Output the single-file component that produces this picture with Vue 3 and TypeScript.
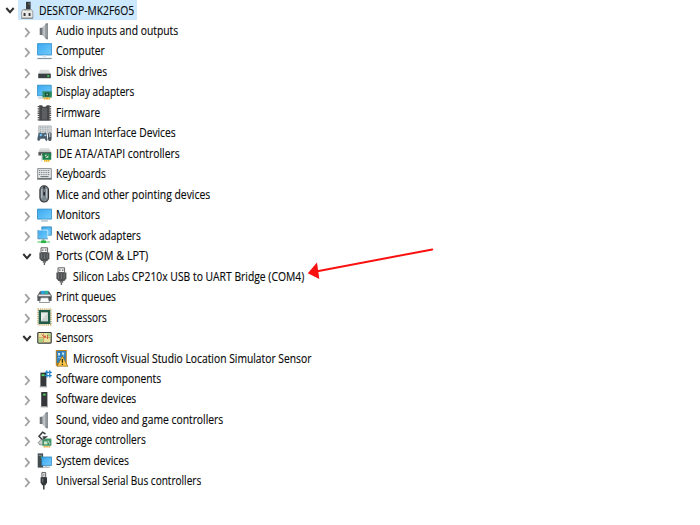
<script setup lang="ts">
import { onMounted, ref } from 'vue'

interface DeviceRow {
  label: string
  icon: string
  level: 0 | 1 | 2
  state: 'open' | 'closed' | 'leaf'
  width: number
}

const rows: DeviceRow[] = [
  { label: 'DESKTOP-MK2F6O5', icon: 'host', level: 0, state: 'open', width: 95.5 },
  { label: 'Audio inputs and outputs', icon: 'speaker', level: 1, state: 'closed', width: 122 },
  { label: 'Computer', icon: 'computer', level: 1, state: 'closed', width: 49 },
  { label: 'Disk drives', icon: 'disk', level: 1, state: 'closed', width: 51 },
  { label: 'Display adapters', icon: 'display', level: 1, state: 'closed', width: 78 },
  { label: 'Firmware', icon: 'firmware', level: 1, state: 'closed', width: 44.5 },
  { label: 'Human Interface Devices', icon: 'hid', level: 1, state: 'closed', width: 119.5 },
  { label: 'IDE ATA/ATAPI controllers', icon: 'ide', level: 1, state: 'closed', width: 123.5 },
  { label: 'Keyboards', icon: 'keyboard', level: 1, state: 'closed', width: 50 },
  { label: 'Mice and other pointing devices', icon: 'mouse', level: 1, state: 'closed', width: 154 },
  { label: 'Monitors', icon: 'monitor', level: 1, state: 'closed', width: 44 },
  { label: 'Network adapters', icon: 'network', level: 1, state: 'closed', width: 84.5 },
  { label: 'Ports (COM & LPT)', icon: 'port', level: 1, state: 'open', width: 92 },
  { label: 'Silicon Labs CP210x USB to UART Bridge (COM4)', icon: 'port', level: 2, state: 'leaf', width: 231 },
  { label: 'Print queues', icon: 'printer', level: 1, state: 'closed', width: 60 },
  { label: 'Processors', icon: 'processor', level: 1, state: 'closed', width: 51 },
  { label: 'Sensors', icon: 'sensor', level: 1, state: 'open', width: 37 },
  { label: 'Microsoft Visual Studio Location Simulator Sensor', icon: 'warning', level: 2, state: 'leaf', width: 238.5 },
  { label: 'Software components', icon: 'component', level: 1, state: 'closed', width: 105 },
  { label: 'Software devices', icon: 'software', level: 1, state: 'closed', width: 80 },
  { label: 'Sound, video and game controllers', icon: 'speaker', level: 1, state: 'closed', width: 167 },
  { label: 'Storage controllers', icon: 'storage', level: 1, state: 'closed', width: 90 },
  { label: 'System devices', icon: 'system', level: 1, state: 'closed', width: 73 },
  { label: 'Universal Serial Bus controllers', icon: 'usb', level: 1, state: 'closed', width: 145 },
]

const tree = ref<HTMLElement | null>(null)
const scales = ref<number[]>(rows.map(() => 0.86))

onMounted(() => {
  const texts = tree.value?.querySelectorAll<HTMLElement>('.text')
  if (!texts) return
  scales.value = Array.from(texts).map((el, i) => rows[i].width / el.offsetWidth)
})
</script>

<template>
  <main class="window">
    <svg class="defs" width="0" height="0" aria-hidden="true">
      <defs>
        <linearGradient id="blue" x1="0" y1="0" x2="1" y2="1">
          <stop offset="0" stop-color="#3aa8f0" /><stop offset="1" stop-color="#74ccfc" />
        </linearGradient>
        <linearGradient id="metal" x1="0" y1="0" x2="1" y2="0">
          <stop offset="0" stop-color="#8b9196" /><stop offset="0.5" stop-color="#cdd1d4" /><stop offset="1" stop-color="#8d9296" />
        </linearGradient>
        <linearGradient id="lid" x1="0" y1="0" x2="0" y2="1">
          <stop offset="0" stop-color="#e9e9e9" /><stop offset="1" stop-color="#bfc1c2" />
        </linearGradient>
      </defs>
    </svg>
    <ul ref="tree" class="tree">
      <li v-for="(row, i) in rows" :key="i" class="row" :class="'level-' + row.level">
        <span class="toggle">
          <svg v-if="row.state === 'open'" width="10" height="12" viewBox="0 0 10 12">
            <path d="M1.3 4 L5 8.2 L8.7 4" fill="none" stroke="#303030" stroke-width="2" />
          </svg>
          <svg v-else-if="row.state === 'closed'" width="10" height="14" viewBox="0 0 10 14">
            <path d="M3.2 4.2 L7.1 8.6 L3.2 13" fill="none" stroke="#a2a2a2" stroke-width="1.8" />
          </svg>
        </span>
        <span class="item" :class="{ selected: row.level === 0 }">
          <svg class="icon" width="15" height="18" viewBox="0 0 15 18">
            <g v-if="row.icon === 'host'">
              <path d="M6 .8h4.6v7.6H6z" fill="#363a3d" /><path d="M8.6 2.4h1.1v1.2H8.6z" fill="#a6adb1" />
              <path d="M2.8 8.6h8.8l1.2 2.4v6.3H1.6V11z" fill="#e9e9e6" stroke="#8b8f90" stroke-width=".8" />
              <path d="M4.2 8.8h6" stroke="#777c7e" />
              <path d="M3.6 12h1.9v3H3.6zM8.6 12h1.9v3H8.6z" fill="#34383b" /><path d="M1.5 17.2h11.5" stroke="#77797a" stroke-width=".9" />
            </g>
            <g v-else-if="row.icon === 'speaker'">
              <path d="M2.7 5.8h2.8v7.2H2.7z" fill="#6d7479" />
              <path d="M5.2 5.8L9 1.4V17L5.2 13z" fill="url(#metal)" />
              <path d="M8.8 1.2h2.1v16.2L8.8 17z" fill="#7d8387" /><path d="M9.2 3v12" stroke="#b1b7bb" stroke-width=".7" />
            </g>
            <g v-else-if="row.icon === 'computer'">
              <path d="M.4 1.6h14.2v11.4H.4z" fill="url(#blue)" stroke="#2b8cc8" stroke-width=".8" />
              <path d="M5.5 13.4h4v1.7h-4z" fill="#d7e3eb" /><path d="M.3 16.5h14.4" stroke="#7f95a6" stroke-width="1.2" />
            </g>
            <g v-else-if="row.icon === 'disk'">
              <path d="M3.2 6.8h8.4l2 3.9H1.4z" fill="#d9dbdc" />
              <path d="M1.2 10.6h12.6v4.6H1.2z" fill="#3a3f42" /><path d="M10.3 12.2h1.8v1.6h-1.8z" fill="#42e857" />
            </g>
            <g v-else-if="row.icon === 'display'">
              <path d="M.4 2.2h13.8v10.6H.4z" fill="url(#blue)" stroke="#2d89c0" stroke-width=".8" />
              <path d="M1 15h5" stroke="#a9bac5" /><path d="M5.5 8.3h9.3v6.3H5.5z" fill="#2f8e61" />
              <path d="M8 9.6h4.4v3.8H8z" fill="#174d3a" /><path d="M9.2 10.7h2v1.6h-2z" fill="#7bb296" />
              <path d="M6.6 15.6h6.6" stroke="#f0aa22" stroke-width="2" stroke-dasharray="2 .4" />
            </g>
            <g v-else-if="row.icon === 'firmware'">
              <path d="M1.6 2v15M13.2 2v15" stroke="#505050" stroke-width="1.9" stroke-dasharray="1.3 .9" />
              <path d="M2.2 1.2h2.9c.4 2 4.2 2 4.6 0h2.9v15.6H2.2z" fill="#454748" />
              <path d="M7.4 4v11.5" stroke="#5d6062" stroke-width="5" />
            </g>
            <g v-else-if="row.icon === 'hid'">
              <path d="M1.8 2h12.4v8H1.8z" fill="#dde0e2" stroke="#9ba3a8" stroke-width=".8" />
              <path d="M3 3.8h10.2M3 5.8h10.2M3 7.8h10.2" stroke="#87929a" stroke-width=".9" stroke-dasharray="1 .7" />
              <path d="M1.6 9.2q2-1.5 3 0h1.8q2-1.5 3 0l1.1 6.4c-.2 2-2 1.8-2.6-.9H3.5C2.8 17.5.4 17.5.3 15z" fill="#4a5f70" />
              <path d="M11 10.4c0-2.5 3.6-2.5 3.6 0v4c0 3.4-3.6 3.4-3.6 0z" fill="#4b565f" />
              <path d="M12.8 9v4" stroke="#d9e3e9" /><circle cx="3.8" cy="11" r="1.2" fill="#6fc4fb" /><circle cx="8.2" cy="11.3" r=".9" fill="#b6dffb" />
            </g>
            <g v-else-if="row.icon === 'ide'">
              <path d="M3.2 3h8.8l2 4.3H1.4z" fill="url(#lid)" /><path d="M1.4 7.1h12.8v3.4H1.4z" fill="#505557" />
              <path d="M4.7 8.6v8" stroke="#d3d5d5" stroke-width="1.1" />
              <path d="M5.4 8.2h8.8v6.6H5.4z" fill="#1c8248" /><path d="M8 9.7h3.4v3.2H8z" fill="#b9dec4" /><path d="M7.6 12.8l3.4-3" stroke="#12482b" />
              <path d="M7 15.9h5.6" stroke="#edbb28" stroke-width="1.9" stroke-dasharray="1.7 .3" />
            </g>
            <g v-else-if="row.icon === 'keyboard'">
              <path d="M.7 3.6h13.6v9.8H.7z" fill="#e6e8e9" stroke="#888d90" />
              <path d="M2 5.6h11M2 7.6h11M2 9.6h11" stroke="#777e82" stroke-width="1" stroke-dasharray="1.1 .7" /><path d="M3.5 11.6h8" stroke="#6b7174" /><path d="M.2 14h14.6" stroke="#54595c" stroke-width="1.2" />
            </g>
            <g v-else-if="row.icon === 'mouse'">
              <rect x="2.9" y=".8" width="8.6" height="16.2" rx="4.3" fill="#7c868d" stroke="#2f3336" stroke-width="1.1" />
              <path d="M4.8 4v9M9.6 4v9" stroke="#bcc5cb" stroke-width="1.1" /><path d="M7.2 1.5v9" stroke="#24282b" stroke-width="1.7" /><path d="M7.2 3.5v3.5" stroke="#cbd4d9" stroke-width=".7" />
            </g>
            <g v-else-if="row.icon === 'monitor'">
              <path d="M.5 3.1h14.1v10H.5z" fill="url(#blue)" stroke="#2b89c2" stroke-width=".8" />
              <path d="M5.5 13.5h4v1h-4z" fill="#c4d4de" /><path d="M4 15h7" stroke="#8fa4b2" stroke-width=".9" />
            </g>
            <g v-else-if="row.icon === 'network'">
              <path d="M4.8 .9h9.6v8.3H4.8z" fill="url(#blue)" stroke="#2c81b1" stroke-width=".8" />
              <path d="M1 4.1h9.8v8.6H1z" fill="url(#blue)" stroke="#e1f3fd" stroke-width=".8" /><path d="M1 12.8h9.8M1 4v9" stroke="#2378a8" stroke-width=".8" />
              <path d="M6.3 13v2" stroke="#7faa8c" stroke-width="1.6" /><path d="M.4 16h12.6" stroke="#a3e2ad" stroke-width="2" /><path d="M4 15.8h5" stroke="#2bb446" stroke-width="2.6" />
            </g>
            <g v-else-if="row.icon === 'port'">
              <path d="M4 .8h6.6v4.8H4z" fill="#f2f2f2" stroke="#555" stroke-width=".9" /><path d="M5.3 2.4h1.1v1.4H5.3zM8.2 2.4h1.1v1.4H8.2z" fill="#333" />
              <path d="M2.4 5.4h10v6L10.4 14h-6l-2-2.6z" fill="#505354" /><path d="M4.5 6.5v5M7.4 6.5v5.5M10.2 6.5v5" stroke="#7f8283" stroke-width=".7" />
              <path d="M5.7 14h3.5v1.7H5.7z" fill="#68696a" /><path d="M7.4 15.5V18" stroke="#666" stroke-width="1.4" />
            </g>
            <g v-else-if="row.icon === 'printer'">
              <path d="M3 3.2h9L14.6 7.5V13H.4V7.5z" fill="#54595c" />
              <path d="M3.9 2.8h3.8v3.2H3.9z" fill="#2d9fdf" /><path d="M7.6 2.8h3.7v3.2H7.6z" fill="#2bb0a0" />
              <path d="M1.8 6.4h11.4l.6 2.2H1.2z" fill="#e6e8e9" /><path d="M.4 9h14.2" stroke="#3e4244" stroke-width=".8" />
              <path d="M3.8 9.7h7.4l1.4 4.8H2.4z" fill="#fafbfb" stroke="#7b8083" stroke-width=".8" />
            </g>
            <g v-else-if="row.icon === 'processor'">
              <path d="M1 1.2h13v15.6H1z" fill="none" stroke="#b99a4c" stroke-width="1.2" stroke-dasharray="1.1 .8" />
              <path d="M1.7 2h11.6v14H1.7z" fill="#225d49" /><path d="M4 4.6h7v8.8H4z" fill="#ccd3d2" /><path d="M4 4.6h7L4 13.2z" fill="#e6eae9" />
            </g>
            <g v-else-if="row.icon === 'sensor'">
              <rect x=".8" y="3.5" width="13.4" height="10.6" rx=".8" fill="#e9e29f" stroke="#3a3c3b" stroke-width="1.2" />
              <path d="M2 9.5h4v3.8H2zM10 4.5h3.4v3H10z" fill="#a5cf83" /><path d="M2 8.6h11.4M6.5 4.2v9.3" stroke="#d09b5c" stroke-width=".9" />
              <path d="M4.5 5.5L8 8.5M10.5 6v4" fill="none" stroke="#cc6046" stroke-width="1" /><circle cx="8" cy="7.5" r="1" fill="#d4503f" />
            </g>
            <g v-else-if="row.icon === 'warning'">
              <path d="M1.8 1h11v15.8h-11z" fill="#b98126" /><path d="M2.8 2h9v12h-9z" fill="#2f80be" />
              <path d="M4 4h2v2.5H4zM8 3.6h2.2v2.2H8z" fill="#cae3f3" /><path d="M4 8.6q3 2 6-2" fill="none" stroke="#8dc7ec" />
              <path d="M8.4 7L13.8 17.2H3z" fill="#fbc848" stroke="#8f6218" stroke-width=".7" /><path d="M8.4 10v3.8M8.4 14.8V16" stroke="#32291a" stroke-width="1.3" />
            </g>
            <g v-else-if="row.icon === 'component'">
              <path d="M3.4 2.6h6v13.6h-6z" fill="#34383a" /><path d="M4.6 5.2h3" stroke="#53dd61" stroke-width="1.8" />
              <path d="M2.8 16.7h7.2" stroke="#8f9395" stroke-width="1.2" />
              <path d="M9.8 .6v6.8M12.8 .6v6.8M7.8 2.4h7M7.8 5.6h7" stroke="#2785ca" stroke-width="1.4" />
            </g>
            <g v-else-if="row.icon === 'software'">
              <path d="M4.2 2h6.2v14.2H4.2z" fill="#34383a" /><path d="M6.2 4.6h2.4" stroke="#53dd61" stroke-width="1.8" />
              <path d="M3.8 16.7h7.2" stroke="#8f9395" stroke-width="1.2" />
            </g>
            <g v-else-if="row.icon === 'storage'">
              <path d="M8.5 3L5.6 1.2 2 5.2l3.4 3.6L9 6H5.6" fill="none" stroke="#3c3f41" stroke-width="1.5" />
              <path d="M1.2 11.4l2.6-2.6h4v5H2.6z" fill="#c8cdce" stroke="#65706b" stroke-width=".7" />
              <path d="M5.4 9.2l3.2-1.6h5.8v7.2h-9z" fill="#3f9366" /><path d="M7 10.4h3.4v3H7z" fill="#d1e3c9" /><path d="M11 9.5l2 3.8" stroke="#bad9bf" />
              <path d="M6.6 15.8h6.6" stroke="#e0a83c" stroke-width="1.5" stroke-dasharray="1.4 .4" />
            </g>
            <g v-else-if="row.icon === 'system'">
              <path d="M.7 1.4h5.4v14.2H.7z" fill="#454c50" /><path d="M1.6 3.3h3.2" stroke="#8b979d" /><path d="M4.3 4.3v2" stroke="#53dd61" />
              <path d="M4.8 5h9.9v8.4H4.8z" fill="url(#blue)" stroke="#2b84b8" stroke-width=".8" /><path d="M9 13.5v1.5M6 15.2h7.2" stroke="#95a8b4" />
            </g>
            <g v-else>
              <path d="M4.9 .6h3.8v4.8H4.9z" fill="#eee" stroke="#4d4f50" stroke-width=".9" /><path d="M6.2 2.4h1.2v1.2H6.2z" fill="#333" />
              <path d="M3.6 5.2H10v5.4L8.4 13.2H5.2L3.6 10.6z" fill="#333638" /><path d="M5.8 6.5v4" stroke="#7e8283" />
              <path d="M6.8 13v4.4" stroke="#383b3d" stroke-width="1.5" />
            </g>
          </svg>
          <span class="label"><span class="text" :style="{ transform: `scaleX(${scales[i]})` }">{{ row.label }}</span></span>
        </span>
      </li>
    </ul>
    <svg class="pointer" width="130" height="36" viewBox="0 0 130 36" aria-hidden="true">
      <path d="M9 27.6L125.3 5.4" fill="none" stroke="#fb1010" stroke-width="2" stroke-linecap="round" />
      <path d="M.8 29.3L10 18.5L12.3 35z" fill="#fb1010" />
    </svg>
  </main>
</template>

<style>
body {
  margin: 0;
  background: #fff;
}
</style>

<style scoped>
.window {
  position: relative;
  width: 700px;
  height: 525px;
  overflow: hidden;
  background: #fff;
  color: #080808;
  font-family: 'Open Sans', 'Noto Sans', sans-serif;
  font-size: 13.3px;
}
.defs {
  position: absolute;
}
.tree {
  display: grid;
  grid-auto-rows: 20.48px;
  margin: 0;
  padding: 0;
  list-style: none;
}
.row {
  display: flex;
  align-items: center;
}
.level-0 {
  padding-left: 4px;
}
.level-1 {
  padding-left: 21px;
}
.level-2 {
  padding-left: 38px;
}
.toggle {
  display: flex;
  flex: none;
  justify-content: center;
  width: 11px;
  margin-right: 5px;
}
.item {
  display: flex;
  align-items: center;
  height: 100%;
}
.selected {
  width: 117px;
  margin-left: -2px;
  padding-left: 2px;
  background: #cce8ff;
}
.icon {
  flex: none;
}
.label {
  padding-left: 4px;
  padding-bottom: 1.4px;
  line-height: 20px;
  white-space: nowrap;
}
.text {
  display: inline-block;
  transform-origin: left center;
  -webkit-text-stroke: 0.15px #080808;
}
.pointer {
  position: absolute;
  left: 307px;
  top: 244px;
}
</style>
